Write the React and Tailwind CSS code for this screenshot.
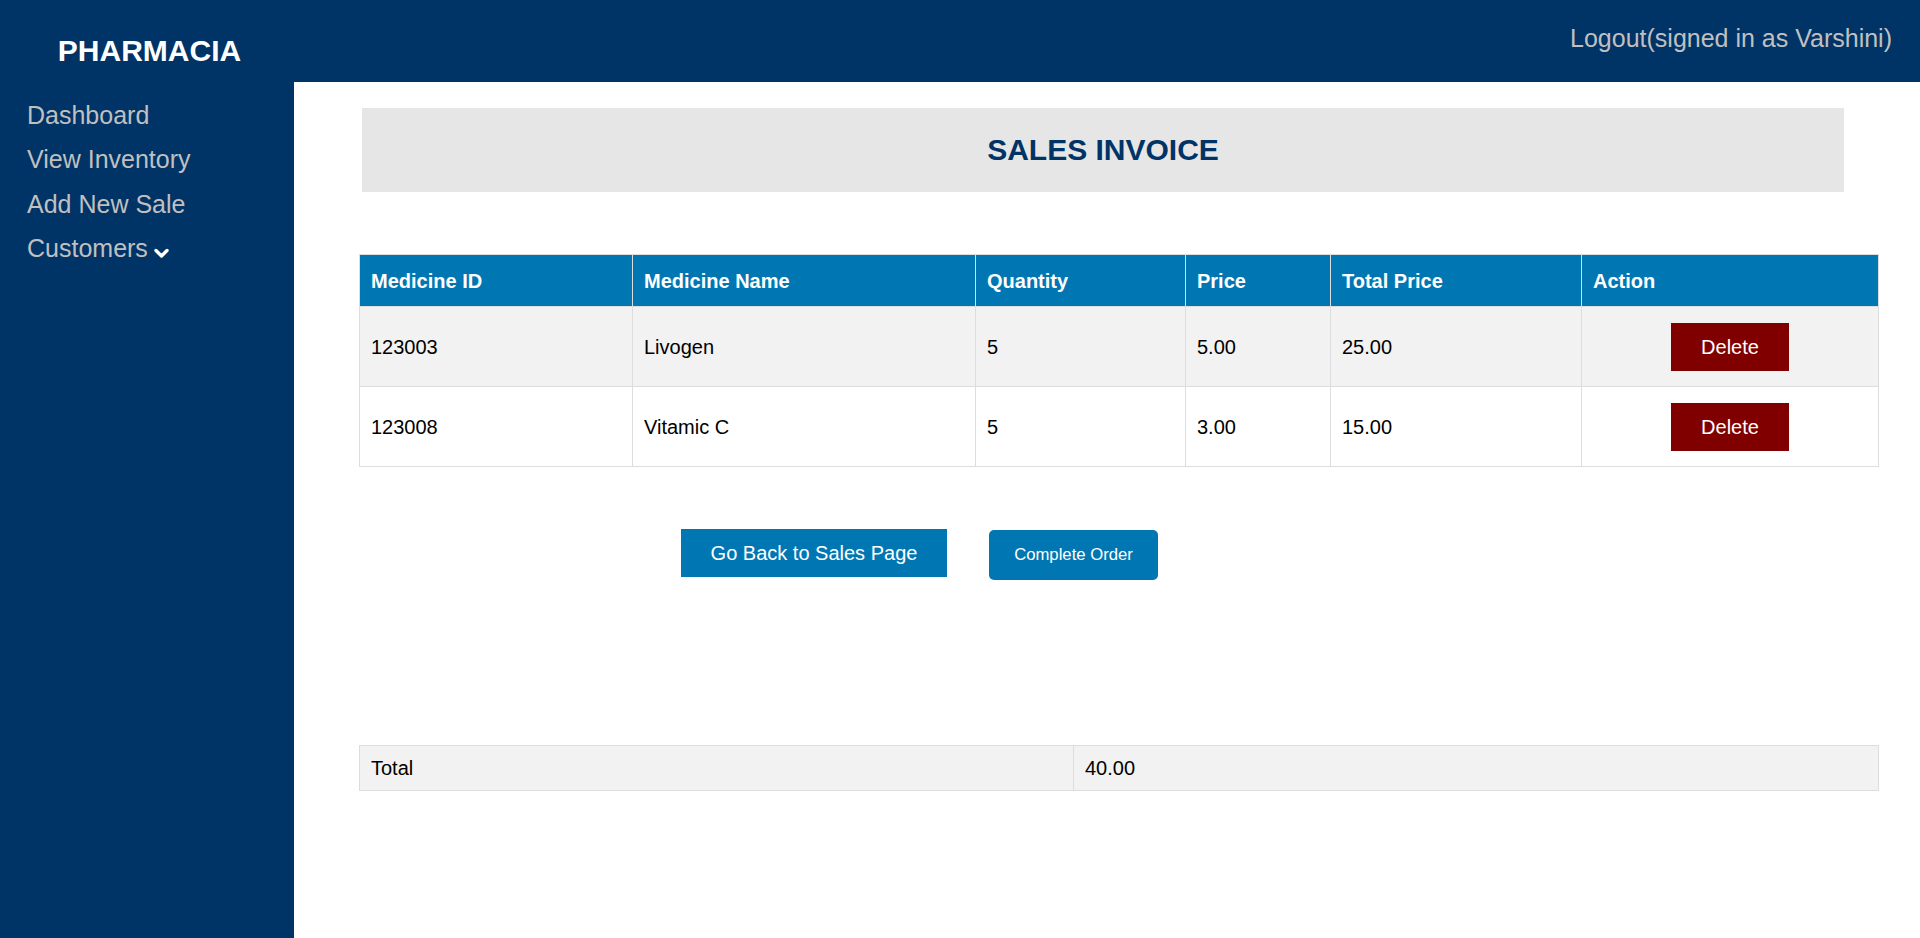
export default function App() {
  const rows = [
    { id: "123003", name: "Livogen", qty: "5", price: "5.00", total: "25.00", bg: "bg-[#f2f2f2]" },
    { id: "123008", name: "Vitamic C", qty: "5", price: "3.00", total: "15.00", bg: "bg-white" },
  ];
  const cols = [273, 343, 210, 145, 251, 297];
  const heads = ["Medicine ID", "Medicine Name", "Quantity", "Price", "Total Price", "Action"];
  return (
    <div className="w-[1920px] h-[938px] flex flex-col bg-white overflow-hidden" style={{ fontFamily: '"Liberation Sans", Arial, sans-serif' }}>
      <header className="h-[82px] shrink-0 bg-[#003366] flex items-start justify-between">
        <div className="w-[294px] pt-[33px] pl-[5px] text-center text-white font-bold text-[30px] leading-[36px]">PHARMACIA</div>
        <div className="pt-[23px] pr-[28px] text-[25px] leading-[30px] text-[#c0c0c0]">Logout(signed in as Varshini)</div>
      </header>
      <div className="flex flex-1">
        <nav className="w-[294px] shrink-0 bg-[#003366] pt-[11px] pl-[27px] text-[25px] leading-[44.4px] text-[#c0c0c0]">
          <div>Dashboard</div>
          <div>View Inventory</div>
          <div>Add New Sale</div>
          <div className="flex items-center">
            <span>Customers</span>
            <svg className="ml-[6px] mt-[10px]" width="15" height="11" viewBox="0 0 15 11">
              <polyline points="2,2.5 7.5,8 13,2.5" fill="none" stroke="white" strokeWidth="3.4" strokeLinecap="round" strokeLinejoin="round" />
            </svg>
          </div>
        </nav>
        <main className="flex-1 pt-[26px] pl-[65px] flex flex-col items-start">
          <div className="ml-[3px] w-[1482px] h-[84px] bg-[#e6e6e6] flex items-center justify-center">
            <h1 className="text-[30px] font-bold text-[#003366] leading-none">SALES INVOICE</h1>
          </div>
          <table className="mt-[62px] w-[1519px] table-fixed border-collapse text-[20px] text-black">
            <colgroup>
              {cols.map((w, i) => (
                <col key={i} style={{ width: w }} />
              ))}
            </colgroup>
            <thead>
              <tr className="bg-[#0077b3] h-[52px]">
                {heads.map((h) => (
                  <th key={h} className="border border-[#dddddd] pl-[11px] text-left font-bold text-white">{h}</th>
                ))}
              </tr>
            </thead>
            <tbody>
              {rows.map((r) => (
                <tr key={r.id} className={`${r.bg} h-[80px]`}>
                  <td className="border border-[#dddddd] pl-[11px]">{r.id}</td>
                  <td className="border border-[#dddddd] pl-[11px]">{r.name}</td>
                  <td className="border border-[#dddddd] pl-[11px]">{r.qty}</td>
                  <td className="border border-[#dddddd] pl-[11px]">{r.price}</td>
                  <td className="border border-[#dddddd] pl-[11px]">{r.total}</td>
                  <td className="border border-[#dddddd] text-center">
                    <button className="inline-flex items-center justify-center w-[118px] h-[48px] bg-[#800000] text-white text-[20px]">Delete</button>
                  </td>
                </tr>
              ))}
            </tbody>
          </table>
          <div className="mt-[62px] flex items-start">
            <button className="ml-[322px] w-[266px] h-[48px] bg-[#0077b3] text-white text-[20px]">Go Back to Sales Page</button>
            <button className="ml-[42px] mt-[1px] w-[169px] h-[50px] rounded-[5px] bg-[#0077b3] text-white text-[16.7px]">Complete Order</button>
          </div>
          <table className="mt-[165px] w-[1519px] table-fixed border-collapse text-[20px] text-black">
            <colgroup>
              <col style={{ width: 714 }} />
              <col style={{ width: 805 }} />
            </colgroup>
            <tbody>
              <tr className="bg-[#f2f2f2] h-[45px]">
                <td className="border border-[#dddddd] pl-[11px]">Total</td>
                <td className="border border-[#dddddd] pl-[11px]">40.00</td>
              </tr>
            </tbody>
          </table>
        </main>
      </div>
    </div>
  );
}
